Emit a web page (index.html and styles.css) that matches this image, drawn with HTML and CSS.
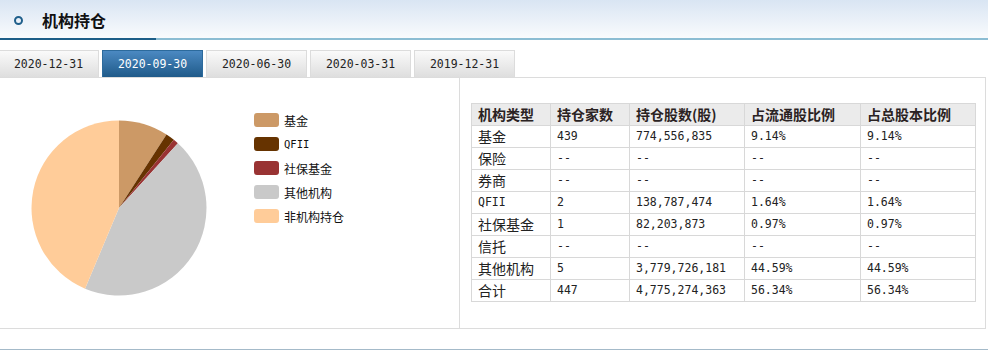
FILE: index.html
```html
<!DOCTYPE html>
<html lang="zh-CN">
<head>
    <meta charset="UTF-8">
    <title>机构持仓</title>
    <link rel="stylesheet" href="styles.css">
</head>
<body>
    <div class="header">
        <span class="dot"></span>
        <h2 class="title">机构持仓</h2>
    </div>

    <div class="tabs">
        <div class="tab">2020-12-31</div>
        <div class="tab active">2020-09-30</div>
        <div class="tab">2020-06-30</div>
        <div class="tab">2020-03-31</div>
        <div class="tab">2019-12-31</div>
    </div>

    <div class="box">
        <div class="chart">
            <svg class="pie" width="176" height="176" viewBox="0 0 176 176">
                <path fill="#cc9966" d="M88 88 L88 0.5 A87.5 87.5 0 0 1 135.53 14.53 Z"/>
                <path fill="#663300" d="M88 88 L135.53 14.53 A87.5 87.5 0 0 1 142.84 19.81 Z"/>
                <path fill="#993333" d="M88 88 L142.84 19.81 A87.5 87.5 0 0 1 146.89 23.28 Z"/>
                <path fill="#c9c9c9" d="M88 88 L146.89 23.28 A87.5 87.5 0 0 1 54.06 168.65 Z"/>
                <path fill="#ffcc99" d="M88 88 L54.06 168.65 A87.5 87.5 0 0 1 88 0.5 Z"/>
            </svg>
            <ul class="legend">
                <li><span class="swatch" style="background:#cc9966"></span>基金</li>
                <li><span class="swatch" style="background:#663300"></span><span class="mono">QFII</span></li>
                <li><span class="swatch" style="background:#993333"></span>社保基金</li>
                <li><span class="swatch" style="background:#c9c9c9"></span>其他机构</li>
                <li><span class="swatch" style="background:#ffcc99"></span>非机构持仓</li>
            </ul>
        </div>

        <div class="data">
            <table>
                <colgroup>
                    <col style="width:79px">
                    <col style="width:79px">
                    <col style="width:115px">
                    <col style="width:116px">
                    <col style="width:115px">
                </colgroup>
                <thead>
                    <tr>
                        <th>机构类型</th>
                        <th>持仓家数</th>
                        <th>持仓股数(股)</th>
                        <th>占流通股比例</th>
                        <th>占总股本比例</th>
                    </tr>
                </thead>
                <tbody>
                    <tr><td>基金</td><td class="num">439</td><td class="num">774,556,835</td><td class="num">9.14%</td><td class="num">9.14%</td></tr>
                    <tr><td>保险</td><td class="num">--</td><td class="num">--</td><td class="num">--</td><td class="num">--</td></tr>
                    <tr><td>券商</td><td class="num">--</td><td class="num">--</td><td class="num">--</td><td class="num">--</td></tr>
                    <tr><td class="num">QFII</td><td class="num">2</td><td class="num">138,787,474</td><td class="num">1.64%</td><td class="num">1.64%</td></tr>
                    <tr><td>社保基金</td><td class="num">1</td><td class="num">82,203,873</td><td class="num">0.97%</td><td class="num">0.97%</td></tr>
                    <tr><td>信托</td><td class="num">--</td><td class="num">--</td><td class="num">--</td><td class="num">--</td></tr>
                    <tr><td>其他机构</td><td class="num">5</td><td class="num">3,779,726,181</td><td class="num">44.59%</td><td class="num">44.59%</td></tr>
                    <tr><td>合计</td><td class="num">447</td><td class="num">4,775,274,363</td><td class="num">56.34%</td><td class="num">56.34%</td></tr>
                </tbody>
            </table>
        </div>
    </div>

    <div class="footer-line"></div>
</body>
</html>
```

FILE: styles.css
```css
body {
    margin: 0;
    font-family: "Noto Sans CJK SC", "Liberation Sans", sans-serif;
    font-size: 12px;
    color: #222;
    background: #fff;
    overflow: hidden;
}
.mono, .num, .tab {
    font-family: "DejaVu Sans Mono", "Noto Sans CJK SC", monospace;
}
.header {
    height: 38px;
    display: flex;
    align-items: center;
    padding-left: 14px;
    border-bottom: 2px solid #8cbdd3;
    background: linear-gradient(#d9e5f3, #f9fbfd);
    position: relative;
}
.header::after {
    content: "";
    position: absolute;
    left: 0;
    bottom: -2px;
    width: 156px;
    height: 2px;
    background: #1d5e88;
}
.dot {
    width: 5px;
    height: 5px;
    border: 2px solid #1f5f8b;
    border-radius: 50%;
    margin-top: 3px;
}
.title {
    margin: 2px 0 0 19px;
    font-size: 16px;
    font-weight: bold;
    color: #111;
}
.tabs {
    display: flex;
    gap: 3px;
    margin: 10px 0 0 -2px;
    height: 27px;
}
.tab {
    width: 99px;
    height: 26px;
    line-height: 27px;
    text-align: center;
    font-size: 11.5px;
    color: #222;
    border: 1px solid #dcdcdc;
    border-bottom: none;
    background: linear-gradient(#fafafa, #dedede);
}
.tab.active {
    color: #fff;
    border-color: #2c6a9c;
    background: linear-gradient(#4b89c2, #1f5a89);
}
.box {
    display: flex;
    height: 250px;
    width: 985px;
    border: 1px solid #dcdcdc;
    border-left: none;
}
.chart {
    width: 460px;
    border-right: 1px solid #dcdcdc;
    display: flex;
    align-items: flex-start;
    padding: 30px 0 0 31px;
    box-sizing: border-box;
}
.pie {
    margin-top: 12px;
    flex: none;
}
.legend {
    list-style: none;
    margin: 0 0 0 47px;
    padding: 0;
}
.legend li {
    display: flex;
    align-items: center;
    height: 24px;
    font-size: 12px;
    color: #111;
}
.legend .mono {
    font-size: 10.5px;
}
.swatch {
    width: 25px;
    height: 14px;
    border-radius: 3px;
    margin-right: 5px;
}
.data {
    padding: 25px 0 0 11px;
}
table {
    border-collapse: collapse;
    table-layout: fixed;
    width: 505px;
}
th, td {
    border: 1px solid #d8d8d8;
    height: 21px;
    line-height: 21px;
    padding: 0 0 0 6px;
    vertical-align: middle;
    text-align: left;
    font-size: 14px;
    color: #222;
    white-space: nowrap;
}
th {
    background: #ebebeb;
    font-weight: bold;
    color: #2a2222;
}
td.num {
    font-size: 11.5px;
}
.footer-line {
    margin-top: 20px;
    height: 1px;
    background: #a4bac9;
}
```
